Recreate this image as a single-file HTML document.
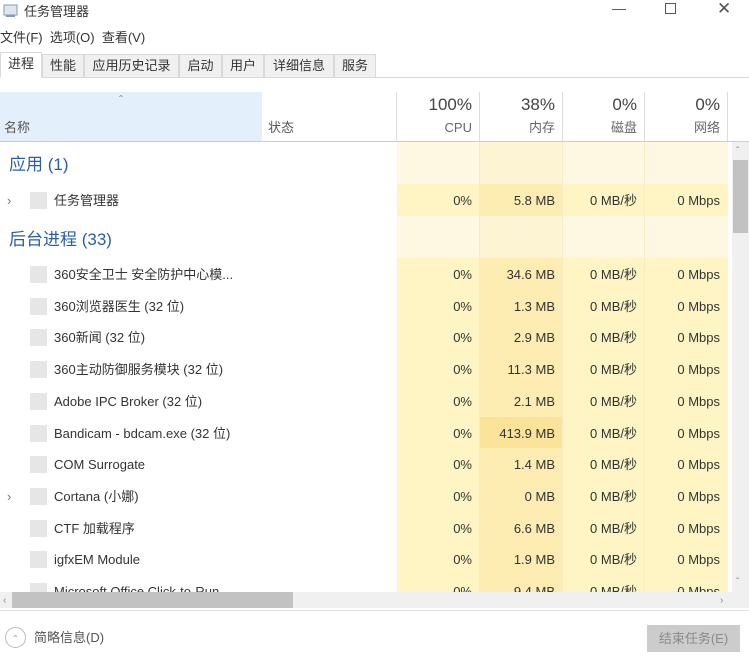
<!DOCTYPE html>
<html><head><meta charset="utf-8"><style>
*{margin:0;padding:0;box-sizing:border-box}
body{width:749px;height:664px;background:#fff;font-family:"Liberation Sans","Noto Sans CJK SC",sans-serif;color:#333;position:relative;overflow:hidden;font-size:13px}
.a{position:absolute;white-space:nowrap;line-height:17px}
.r{text-align:right}
.tab{position:absolute;top:54px;height:24px;background:#f0f0f0;border:1px solid #d9d9d9;font-size:13px;line-height:22px;text-align:center;color:#333}
.ck{position:absolute;width:17px;height:17px;background:#e6e6e6}
</style></head><body>
<svg class="a" style="left:3px;top:4px" width="16" height="14"><rect x="1" y="1" width="13" height="10" fill="#dfe6ee" stroke="#8a9aac"/><rect x="3" y="11" width="9" height="2" fill="#8a9aac"/></svg>
<div class="a" style="left:24px;top:3px;font-size:13px;color:#333">任务管理器</div>
<div class="a" style="left:612px;top:0;font-size:14px;color:#555">—</div>
<div class="a" style="left:665px;top:3px;width:11px;height:11px;border:1px solid #555"></div>
<div class="a" style="left:717px;top:0px;font-size:17px;color:#555">✕</div>
<div class="a" style="left:0;top:29px;font-size:13px;color:#333">文件(F)&nbsp; 选项(O)&nbsp; 查看(V)</div>
<div class="a" style="left:0;top:77px;width:749px;border-top:1px solid #d9d9d9"></div>
<div class="tab" style="left:0;width:42px;background:#fff;border-bottom-color:#fff;top:52px;height:26px">进程</div>
<div class="tab" style="left:42px;width:42px">性能</div>
<div class="tab" style="left:84px;width:95px">应用历史记录</div>
<div class="tab" style="left:179px;width:43px">启动</div>
<div class="tab" style="left:222px;width:42px">用户</div>
<div class="tab" style="left:264px;width:70px">详细信息</div>
<div class="tab" style="left:334px;width:42px">服务</div>
<div class="a" style="left:0;top:92px;width:262px;height:49px;background:#e3f0fc"></div>
<div class="a" style="left:119px;top:92px;font-size:12px;color:#888">ˆ</div>
<div class="a" style="left:4px;top:119px;color:#555">名称</div>
<div class="a" style="left:268px;top:119px;color:#555">状态</div>
<div class="a" style="left:396px;top:92px;height:49px;border-left:1px solid #ddd"></div>
<div class="a" style="left:479px;top:92px;height:49px;border-left:1px solid #ddd"></div>
<div class="a" style="left:562px;top:92px;height:49px;border-left:1px solid #ddd"></div>
<div class="a" style="left:644px;top:92px;height:49px;border-left:1px solid #ddd"></div>
<div class="a" style="left:727px;top:92px;height:49px;border-left:1px solid #ddd"></div>
<div class="a" style="left:0;top:141px;width:749px;border-top:1px solid #ccc"></div>
<div id="hdr"></div>
<div id="body"></div>
<div class="a" style="left:732px;top:142px;width:17px;height:450px;background:#f0f0f0"></div>
<div class="a" style="left:736px;top:143px;font-size:10px;color:#888">ˆ</div>
<div class="a" style="left:733px;top:160px;width:15px;height:73px;background:#c2c2c2"></div>
<div class="a" style="left:736px;top:574px;font-size:10px;color:#888">ˇ</div>
<div class="a" style="left:0;top:592px;width:749px;height:16px;background:#f0f0f0"></div>
<div class="a" style="left:12px;top:592px;width:281px;height:16px;background:#c2c2c2"></div>
<div class="a" style="left:3px;top:592px;font-size:10px;color:#888">‹</div>
<div class="a" style="left:720px;top:592px;font-size:10px;color:#888">›</div>
<div class="a" style="left:0;top:610px;width:749px;border-top:1px solid #e3e3e3"></div>
<div class="a" style="left:5px;top:627px;width:21px;height:21px;border:1px solid #bbb;border-radius:50%;font-size:12px;color:#999;text-align:center;line-height:24px">ˆ</div>
<div class="a" style="left:34px;top:629px;color:#555">简略信息(D)</div>
<div class="a" style="left:647px;top:625px;width:93px;height:27px;background:#cccccc;color:#8a8a8a;text-align:center;line-height:27px">结束任务(E)</div>
<script>
var h='',b='';
var cols=[[397,83,'100%','CPU'],[480,83,'38%','内存'],[563,82,'0%','磁盘'],[645,83,'0%','网络']];
cols.forEach(function(c){h+='<div class="a r" style="left:'+c[0]+'px;width:'+(c[1]-8)+'px;top:95px;font-size:17px;line-height:20px;color:#444">'+c[2]+'</div><div class="a r" style="left:'+c[0]+'px;width:'+(c[1]-8)+'px;top:119px;color:#666">'+c[3]+'</div>';});
document.getElementById('hdr').innerHTML=h;
function cells(top,hgt,light,memc){
 var s='';
 s+='<div class="a" style="left:397px;top:'+top+'px;width:331px;height:'+hgt+'px;background:'+(light?'#fef8e2':'#fff4c4')+'"></div>';
 s+='<div class="a" style="left:480px;top:'+top+'px;width:83px;height:'+hgt+'px;background:'+(light?'#fdf4d4':(memc||'#fdedb3'))+'"></div>';
 [479,562,644].forEach(function(x){s+='<div class="a" style="left:'+x+'px;top:'+top+'px;height:'+hgt+'px;border-left:1px solid #f7ecc4"></div>'});
 return s;
}
function row(top,next,name,mem,arrow,memc){
 var s=cells(top,next-top,false,memc);var cy=top+8;
 if(arrow)s+='<div class="a" style="left:7px;top:'+(cy)+'px;color:#777;font-size:13px">›</div>';
 s+='<div class="ck" style="left:30px;top:'+(cy)+'px"></div>';
 s+='<div class="a" style="left:54px;top:'+(cy)+'px;color:#333">'+name+'</div>';
 var vals=['0%',mem,'0 MB/秒','0 Mbps'];
 cols.forEach(function(c,i){s+='<div class="a r" style="left:'+c[0]+'px;width:'+(c[1]-8)+'px;top:'+(cy)+'px;color:#333">'+vals[i]+'</div>'});
 return s;
}
b+=cells(142,42,true);
b+='<div class="a" style="left:9px;top:155px;font-size:17px;line-height:20px;color:#2b5ea8">应用 (1)</div>';
b+=row(184,216,'任务管理器','5.8 MB',true);
b+=cells(216,42,true);
b+='<div class="a" style="left:9px;top:230px;font-size:17px;line-height:20px;color:#2b5ea8">后台进程 (33)</div>';
var d=[['360安全卫士 安全防护中心模...','34.6 MB'],['360浏览器医生 (32 位)','1.3 MB'],['360新闻 (32 位)','2.9 MB'],['360主动防御服务模块 (32 位)','11.3 MB'],['Adobe IPC Broker (32 位)','2.1 MB'],['Bandicam - bdcam.exe (32 位)','413.9 MB',0,'#fce39a'],['COM Surrogate','1.4 MB'],['Cortana (小娜)','0 MB',1],['CTF 加载程序','6.6 MB'],['igfxEM Module','1.9 MB'],['Microsoft Office Click-to-Run...','9.4 MB']];
d.forEach(function(r,i){var t=Math.round(258+31.7*i),n=Math.round(258+31.7*(i+1));b+=row(t,n,r[0],r[1],r[2],r[3]);});
document.getElementById('body').innerHTML='<div class="a" style="left:0;top:142px;width:732px;height:450px;overflow:hidden">'+b.replace(/top:(\d+(\.\d+)?)px/g,function(m,v){return 'top:'+(parseFloat(v)-142)+'px'})+'</div>';
</script>
</body></html>
